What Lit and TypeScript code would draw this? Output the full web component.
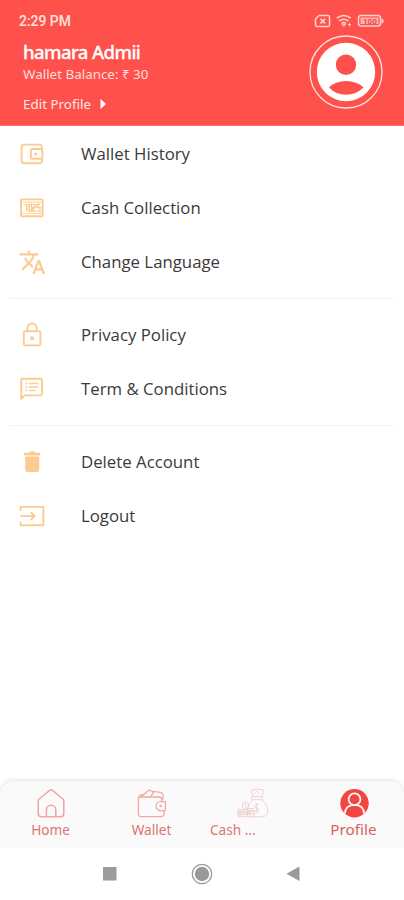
import { LitElement, html, css, svg } from "lit";
import { customElement } from "lit/decorators.js";

const icons: Record<string, unknown> = {
  wallet: svg`<g fill="none" stroke="currentColor" stroke-width="1.9" stroke-linejoin="round">
    <path d="M24 8.800V7.400Q24 4.600 21.200 4.600H6.600Q3.600 4.600 3.600 7.400V20.400Q3.600 23.200 6.600 23.200H21.200Q24 23.200 24 20.400V19"/>
    <rect x="12.800" y="9" width="11.600" height="9.800" rx="1.600"/></g><circle cx="17.600" cy="13.900" r="1.500" fill="currentColor"/>`,
  cash: svg`<rect x="3" y="5.400" width="21.600" height="16.800" rx=".6" fill="none" stroke="currentColor" stroke-width="1.900"/>
    <path d="M4 8.200h20M4 19.400h20" stroke="currentColor" stroke-width="1.200" opacity=".7"/>
    <path d="M6.500 10.600h2.200v6.600M11 17v-6.400h2.600V17zM15 10.600h2.400v3H15.200V17h2.600M22 10.600h-2.500v3H22V17h-2.600" fill="none" stroke="currentColor" stroke-width="1.500"/>`,
  language: svg`<path transform="translate(.4 .5) scale(1.160)" fill="currentColor" d="M12.870 15.070l-2.540-2.510.03-.03c1.740-1.940 2.980-4.170 3.710-6.530H17V4h-7V2H8v2H1v1.990h11.170C11.500 7.920 10.440 9.750 9 11.350 8.070 10.320 7.300 9.190 6.690 8h-2c.73 1.630 1.730 3.170 2.980 4.560l-5.090 5.020L4 19l5-5 3.110 3.110.76-2.040zM18.500 10h-2L12 22h2l1.120-3h4.750L21 22h2l-4.500-12zm-2.620 7l1.620-4.330L19.120 17h-3.240z"/>`,
  lock: svg`<g fill="none" stroke="currentColor" stroke-width="1.900"><rect x="5.800" y="10.200" width="16.600" height="14.200" rx="1.600"/>
    <path d="M9.400 10V7.200a4.700 4.700 0 0 1 9.400 0V10"/></g><circle cx="14.100" cy="17.200" r="2" fill="currentColor"/>`,
  terms: svg`<path d="M3.200 23.800V5Q3.200 3.700 4.500 3.700H22.600Q24 3.700 24 5V19Q24 20.400 22.600 20.400H6.700z" fill="none" stroke="currentColor" stroke-width="1.900" stroke-linejoin="round"/>
    <path d="M7.400 8.600h2M7.400 12h2M7.400 15.500h2M11 8.600h9.500M11 12h9.500M11 15.500h6.500" stroke="currentColor" stroke-width="1.500"/>`,
  trash: svg`<path fill="currentColor" d="M7.200 8.600h14V22q0 2-2 2H9.200q-2 0-2-2zM6.200 4.800h4.500l1-1.200h5l1 1.200h4.500v2.600H6.200z"/>`,
  logout: svg`<path d="M2.600 8.800V4.900H25.400V23.300H2.600V19.400M2.400 14.100H16.400M12.800 10.200l4 3.900-4 3.900" fill="none" stroke="currentColor" stroke-width="1.900" stroke-linejoin="round"/>`,
};

const groups: [string, string][][] = [
  [["wallet", "Wallet History"], ["cash", "Cash Collection"], ["language", "Change Language"]],
  [["lock", "Privacy Policy"], ["terms", "Term & Conditions"]],
  [["trash", "Delete Account"], ["logout", "Logout"]],
];

const tabs = [
  { label: "Home", cls: "home", icon: svg`<g fill="none" stroke="currentColor" stroke-width="1.600" stroke-linejoin="round">
    <path d="M3.200 13.200Q3.200 12 4.200 11L14.200 2.600Q16 1.200 17.800 2.600L27.800 11Q28.800 12 28.800 13.200V25.600Q28.800 28.800 25.600 28.800H6.400Q3.200 28.800 3.200 25.600z"/>
    <path d="M11.400 28.500V22a4.700 4.700 0 0 1 9.400 0v6.500"/></g>` },
  { label: "Wallet", cls: "wallet", icon: svg`<g fill="none" stroke="currentColor" stroke-width="1.300" stroke-linejoin="round">
    <path d="M25.800 13.500V11.200Q25.800 9 23.200 9H4.600Q2.400 9 2.400 11V25.200Q2.400 28.700 5.800 28.700H25Q28 28.700 28 25.800V23"/>
    <path d="M2.600 10Q2.800 7 6 6.600L9 6M5.600 8.600L11.600 3.200Q13 1.600 14.800 2.700L17.600 4.200 14.800 8.700M17 3.400L24.200 4.400Q27 4.800 27 7.400L26.800 12"/>
    <path d="M29.400 13.600H24.500a4.500 4.500 0 0 0 0 9h3.700q1.200 0 1.200-1.200z"/><circle cx="24.600" cy="18" r=".6"/></g>` },
  { label: "Cash ...", cls: "cash", icon: svg`<g fill="none" stroke="currentColor" stroke-width=".9" stroke-linejoin="round">
    <path d="M16 9L14.500 3Q14 1 16.500 1.800L20 1 23.500 1.700Q27 .7 26.500 3L24.500 9"/>
    <rect x="14.200" y="8.600" width="12" height="3" rx="1.500"/><path d="M18 5.200l2-2 2 2M16.200 11.600Q9 18 11.200 25M24.500 11.600Q32 18 30.500 25.500 29.500 28.800 25 28.800H17"/>
    <path d="M21.500 16.500q-4-1-4 1.500 0 2 2.500 2.300 2 .4 1.500 2.500-.8 2-4 .6M19.800 15v10"/>
    <circle cx="8.500" cy="17.500" r="3.300"/><path d="M8.500 15.700v3.600M1 21.800h9v2.300H1zM.5 24.100h9.500v2.300H.5zM1.500 26.400H10v2.300H1.500zM10.500 20.500h6v2.500h-6zM10 23h7.500v2.800H10zM10.500 25.800h7v2.900h-7zM3 21.800v6.900M6 21.800v6.900M13 20.500v8.200"/></g>` },
  { label: "Profile", cls: "profile", icon: svg`<circle cx="16.500" cy="15.200" r="14.200" fill="#f44640"/>
    <g fill="none" stroke="#fff" stroke-width="1.700"><circle cx="16.500" cy="11.200" r="5.900"/><path d="M7 25.600C7.100 19.600 11.100 17 16.500 17S25.900 19.600 26 25.600"/></g>` },
];

@customElement("app-root")
export class AppRoot extends LitElement {
  static styles = css`
    :host { display: flex; flex-direction: column; box-sizing: border-box; width: 404px; height: 900px; background: #fff; font-family: "Noto Sans", sans-serif; overflow: hidden; }
    * { box-sizing: border-box; }
    svg { display: block; flex: none; }
    header { height: 126px; background: #ff514c; color: #fff; flex: none; border-bottom: 1px solid #ff6d68; }
    .status { height: 34px; padding: 7px 20px 0 19px; display: flex; align-items: center; justify-content: space-between; font: 500 13.900px/28px Roboto, sans-serif; color: #ffe4df; }
    .signals { display: flex; align-items: center; gap: 5px; }
    .account { display: flex; justify-content: space-between; padding: 0 21px 0 23px; }
    .who { display: flex; flex-direction: column; white-space: nowrap; }
    .name { margin-top: 5px; font-size: 18.500px; line-height: 26px; font-weight: 500; letter-spacing: -.58px; -webkit-text-stroke: .3px #fff; }
    .balance { font-size: 13.400px; line-height: 18px; color: #ffdfdb; }
    .edit { display: flex; align-items: center; gap: 9px; margin-top: 12px; font-size: 13.400px; line-height: 18px; color: #ffe8e5; }
    .avatar { margin-top: 1px; }
    main { flex: 1; padding-top: 1px; }
    .group + .group { border-top: 1px solid #f1f1f1; margin-top: 9px; padding-top: 9px; }
    .group { margin: 0 10px; }
    .item { display: flex; align-items: center; height: 54px; padding-left: 8px; }
    .item svg { color: #fccb91; margin-right: 35px; }
    .item span { font-family: "Open Sans", sans-serif; font-size: 16.800px; line-height: 24px; color: #3a3a3a; white-space: nowrap; }
    .tabs { height: 67px; flex: none; display: grid; grid-template-columns: repeat(4, 1fr); background: #fafafa; border-radius: 14px 14px 0 0; box-shadow: 0 -1px 4px rgba(0, 0, 0, .12); }
    .tab { display: flex; flex-direction: column; align-items: center; padding-top: 7px; color: #f2a9a5; }
    .tab span { font-size: 13.600px; line-height: 18px; margin-top: 2px; color: #dc7672; white-space: nowrap; }
    .cash { color: #efcfcd; }
    .cash span { align-self: flex-start; margin-left: 8px; }
    .profile span { font-size: 15.300px; margin-top: 1px; color: #d9625e; }
    .system { height: 52px; flex: none; display: flex; justify-content: space-between; align-items: center; padding: 0 103px 0 102px; background: #fff; position: relative; z-index: 1; }
  `;

  render() {
    return html`
      <header>
        <div class="status">
          <span>2:29 PM</span>
          <span class="signals">
            <svg width="17" height="14" viewBox="0 0 17 14" fill="none" stroke="#ffd3ce" stroke-width="1.500"><path d="M5 1.500h9q1.500 0 1.500 1.500v8q0 1.500-1.500 1.500H3Q1.500 12.500 1.500 11V5z"/><path d="M6.500 4.800l4.600 4.500M11.100 4.800L6.500 9.300" stroke-width="1.800"/></svg>
            <svg width="16" height="14" viewBox="0 0 16 14" fill="none" stroke="#ffd3ce" stroke-width="1.500"><path d="M.8 4.200q7-5.400 14 0M3 7q4.800-3.700 9.600 0M5.500 9.400q2.300-1.700 4.600 0"/><path d="M6 10.300h3.600l-1.800 2.200zM12 10.500h3M13.500 9v3.500" stroke-width="1"/></svg>
            <svg width="27" height="14" viewBox="0 0 27 14"><rect x="1.500" y="1.500" width="22" height="10.500" rx="2.500" fill="none" stroke="#ffd3ce" stroke-width="1.500"/><rect x="3.500" y="3.500" width="18" height="6.500" fill="#ffb1ab"/><path d="M24.500 4.500l2 1v3l-2 1z" fill="#ffd3ce"/><text x="6" y="9.600" font-size="8" font-weight="700" fill="#e94c48" font-family="Roboto, sans-serif">100</text></svg>
          </span>
        </div>
        <div class="account">
          <div class="who">
            <span class="name">hamara Admii</span>
            <span class="balance">Wallet Balance: ₹ 30</span>
            <span class="edit">Edit Profile <svg width="6" height="10" viewBox="0 0 6 10"><path d="M.5 0L6 5 .5 10z" fill="#fff"/></svg></span>
          </div>
          <svg class="avatar" width="74" height="74" viewBox="0 0 74 74"><circle cx="37" cy="37" r="36" fill="none" stroke="#ffe3df" stroke-width="1.300"/><circle cx="37" cy="37" r="29.200" fill="#fff"/><circle cx="37" cy="29.700" r="10.200" fill="#ff514c"/><path d="M20 52.500Q26 46 37 46T54.500 52.500Q47 59.800 37 59.800T20 52.500z" fill="#ff514c"/></svg>
        </div>
      </header>
      <main>
        ${groups.map((group) => html`<section class="group">${group.map(([icon, label]) => html`
          <div class="item"><svg width="28" height="28" viewBox="0 0 28 28">${icons[icon]}</svg><span>${label}</span></div>`)}</section>`)}
      </main>
      <nav class="tabs">
        ${tabs.map((tab) => html`<div class="tab ${tab.cls}"><svg width="32" height="31" viewBox="0 0 32 31">${tab.icon}</svg><span>${tab.label}</span></div>`)}
      </nav>
      <footer class="system">
        <svg width="16" height="22" viewBox="0 0 16 22"><rect x="1" y="4" width="13.500" height="13.500" fill="#9c9c9c"/></svg>
        <svg width="22" height="22" viewBox="0 0 22 22"><circle cx="11" cy="11" r="9.700" fill="none" stroke="#999" stroke-width="1.300"/><circle cx="11" cy="11" r="7.200" fill="#999"/></svg>
        <svg width="16" height="22" viewBox="0 0 16 22"><path d="M14.500 3.500V18L1.500 10.800z" fill="#999"/></svg>
      </footer>
    `;
  }
}
